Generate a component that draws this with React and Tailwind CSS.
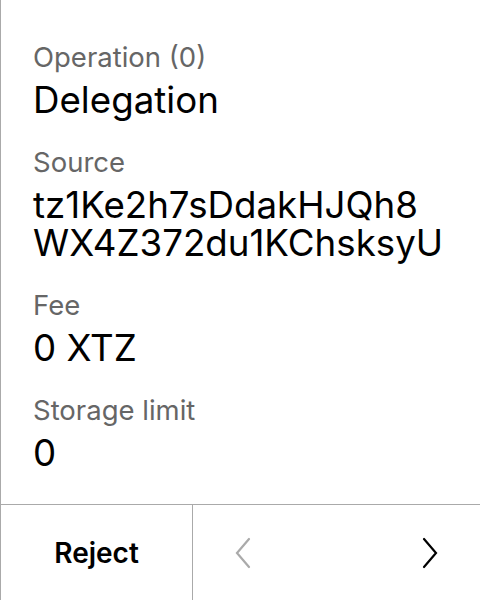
import React from 'react';

const fields = [
  { label: 'Operation (0)', value: 'Delegation' },
  { label: 'Source', value: 'tz1Ke2h7sDdakHJQh8 WX4Z372du1KChsksyU' },
  { label: 'Fee', value: '0 XTZ' },
  { label: 'Storage limit', value: '0' },
];

const Chevron = ({ dir, className }) => (
  <svg width="18" height="32" viewBox="0 0 18 32" fill="none" className={className}>
    <path
      d={dir === 'left' ? 'M15 2 L3 16 L15 30' : 'M3 2 L15 16 L3 30'}
      stroke="currentColor"
      strokeWidth="2.2"
      strokeLinecap="round"
      strokeLinejoin="miter"
    />
  </svg>
);

export default function App() {
  return (
    <div
      className="w-[480px] h-[600px] bg-white flex flex-col border-l border-[#aaaaaa] overflow-hidden"
      style={{ fontFamily: 'Inter, "Noto Sans", sans-serif' }}
    >
      {/* Operation details */}
      <div className="flex-1 pt-[41px] pl-[32px] pr-2 flex flex-col gap-[27px]">
        {fields.map((f) => (
          <div key={f.label} className="flex flex-col gap-[8px]">
            <div className="text-[27.5px] leading-[32px] text-[#666666]">{f.label}</div>
            <div className="text-[36.7px] leading-[38px] text-black w-[440px]">{f.value}</div>
          </div>
        ))}
      </div>

      {/* Bottom nav */}
      <div className="h-[96px] border-t border-[#aaaaaa] flex">
        <div className="w-[192px] border-r border-[#aaaaaa] flex items-center justify-center">
          <span className="text-[28px] font-semibold text-black">Reject</span>
        </div>
        <div className="flex-1 flex items-center justify-between pl-[41px] pr-[41px]">
          <Chevron dir="left" className="text-[#aaaaaa]" />
          <Chevron dir="right" className="text-black" />
        </div>
      </div>
    </div>
  );
}
